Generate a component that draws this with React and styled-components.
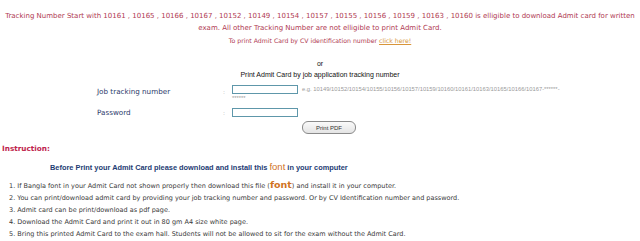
import styled, { createGlobalStyle } from "styled-components";

const GlobalStyle = createGlobalStyle`
  body {
    margin: 0;
    background: #ffffff;
    font-family: "DejaVu Sans", Verdana, sans-serif;
  }
`;

const Page = styled.div`
  width: 640px;
  padding-top: 10px;
`;

const Notice = styled.p`
  margin: 0;
  text-align: center;
  color: #b03a52;
  font-size: 7px;
  line-height: 12px;
`;

const CvLine = styled.p`
  margin: 2px 0 0;
  text-align: center;
  color: #b03a52;
  font-size: 6.2px;
  line-height: 10px;
`;

const Link = styled.a`
  color: #d8953a;
  text-decoration: underline;
`;

const OrBlock = styled.div`
  margin-top: 12px;
  text-align: center;
  font-family: "Liberation Sans", Arial, sans-serif;
  font-size: 7px;
  line-height: 11px;
  color: #111;
`;

const FormGrid = styled.div`
  display: grid;
  grid-template-columns: 126px 9px 335px;
  padding-left: 97px;
  margin-top: 5px;
  row-gap: 5px;
  align-items: start;
`;

const Label = styled.div`
  color: #2c3a6a;
  font-size: 7.2px;
  line-height: 10px;
  padding-top: ${(p) => p.$top || 0}px;
`;

const Colon = styled.div`
  color: #bbb;
  font-size: 6px;
  line-height: 9px;
  padding-top: ${(p) => p.$top || 0}px;
`;

const Field = styled.div`
  font-family: "Liberation Sans", Arial, sans-serif;
  font-size: 5.8px;
  line-height: 9px;
  color: #9a9a9a;
`;

const Input = styled.input`
  width: 66px;
  height: 9px;
  box-sizing: border-box;
  border: 1px solid #5e97aa;
  padding: 0;
  margin: 0 4px 0 0;
  vertical-align: top;
`;

const ButtonRow = styled.div`
  padding-left: 302px;
  margin-top: 3px;
`;

const Button = styled.button`
  display: block;
  width: 54px;
  height: 13px;
  padding: 0;
  border: 1px solid #8a8a8a;
  border-radius: 6px;
  background: linear-gradient(#fafafa, #e4e4e4);
  font-family: "Liberation Sans", Arial, sans-serif;
  font-size: 6px;
  color: #333;
`;

const Heading = styled.h3`
  margin: 10px 0 0 2px;
  color: #c0264e;
  font-size: 7.3px;
  line-height: 10px;
  font-weight: bold;
`;

const Before = styled.p`
  margin: 8px 0 0 50px;
  color: #1d3c73;
  font-family: "Liberation Sans", Arial, sans-serif;
  font-weight: bold;
  font-size: 7.4px;
  line-height: 11px;
`;

const Accent = styled.span`
  color: #d0731f;
  font-size: ${(p) => p.$size || 9}px;
  line-height: 9px;
  font-weight: ${(p) => (p.$bold ? "bold" : "normal")};
`;

const List = styled.ol`
  margin: 7px 0 0;
  padding-left: 9px;
  list-style: none;
  color: #3a3a3a;
  font-size: 6.5px;
  line-height: 12px;
`;

const Item = styled.li``;

const numbers = "10161 , 10165 , 10166 , 10167 , 10152 , 10149 , 10154 , 10157 , 10155 , 10156 , 10159 , 10163 , 10160";

export default function App() {
  return (
    <Page>
      <GlobalStyle />
      <Notice>
        Tracking Number Start with {numbers} is elligible to download Admit card for written
        <br />
        exam. All other Tracking Number are not elligible to print Admit Card.
      </Notice>
      <CvLine>
        To print Admit Card by CV identification number <Link href="#">click here!</Link>
      </CvLine>
      <OrBlock>
        or
        <br />
        Print Admit Card by job application tracking number
      </OrBlock>
      <FormGrid>
        <Label $top={2}>Job tracking number</Label>
        <Colon $top={2}>:</Colon>
        <Field>
          <Input type="text" />
          e.g. 10149/10152/10154/10155/10156/10157/10159/10160/10161/10163/10165/10166/10167-******-******
        </Field>
        <Label>Password</Label>
        <Colon>:</Colon>
        <Field>
          <Input type="password" />
        </Field>
      </FormGrid>
      <ButtonRow>
        <Button type="button">Print PDF</Button>
      </ButtonRow>
      <Heading>Instruction:</Heading>
      <Before>
        Before Print your Admit Card please download and install this <Accent $size={9.5}>font</Accent> in your computer
      </Before>
      <List>
        <Item>
          1. If Bangla font in your Admit Card not shown properly then download this file (<Accent $size={9.5} $bold>font</Accent>) and install it in your computer.
        </Item>
        <Item>2. You can print/download admit card by providing your job tracking number and password. Or by CV Identification number and password.</Item>
        <Item>3. Admit card can be print/download as pdf page.</Item>
        <Item>4. Download the Admit Card and print it out in 80 gm A4 size white page.</Item>
        <Item>5. Bring this printed Admit Card to the exam hall. Students will not be allowed to sit for the exam without the Admit Card.</Item>
      </List>
    </Page>
  );
}
